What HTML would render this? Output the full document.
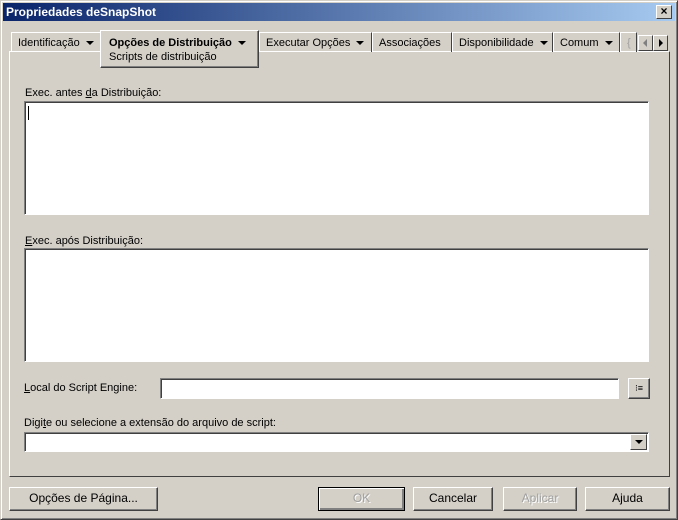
<!DOCTYPE html>
<html><head><style>
*{margin:0;padding:0;box-sizing:border-box}
body{width:678px;height:520px;background:#d4d0c8;font-family:"Liberation Sans",sans-serif;font-size:11px;color:#000;position:relative;overflow:hidden}
.a{position:absolute}
.win{left:0;top:0;width:678px;height:520px;border:1px solid;border-color:#d4d0c8 #404040 #404040 #d4d0c8;box-shadow:inset 1px 1px #fff,inset -1px -1px #808080}
.title{left:3px;top:3px;width:672px;height:18px;background:linear-gradient(90deg,#0a246a,#a6caf0);color:#fff;font-weight:bold;font-size:12px;line-height:18px;padding-left:3px}
.x{left:656px;top:5px;width:16px;height:14px;background:#d4d0c8;border:1px solid;border-color:#fff #404040 #404040 #fff;font-size:12px;line-height:11px;text-align:center;color:#000;font-weight:bold}
.tab{top:32px;height:20px;border:1px solid;border-color:#fff #404040 transparent #fff;border-bottom:none;line-height:20px;padding-left:6px;white-space:nowrap}
.tri{display:inline-block;width:0;height:0;border-left:4px solid transparent;border-right:4px solid transparent;border-top:4px solid #000;vertical-align:middle;margin-left:6px}
.panel{left:9px;top:51px;width:661px;height:426px;border:1px solid;border-color:#fff #404040 #404040 #fff}
.field{background:#fff;border:1px solid;border-color:#808080 #fff #fff #808080;box-shadow:inset 1px 1px #404040}
.btn{height:24px;border:1px solid;border-color:#fff #404040 #404040 #fff;box-shadow:inset -1px -1px #808080;text-align:center;line-height:21px;font-size:12px}
.dis{color:#a0a0a0;text-shadow:1px 1px #fff}
</style></head><body>
<div class="a win"></div>
<div class="a title">Propriedades deSnapShot</div>
<div class="a x">×</div>

<div class="a panel"></div>
<div class="a tab" style="left:11px;width:90px">Identificação<span class="tri"></span></div>
<div class="a tab" style="left:259px;width:113px">Executar Opções<span class="tri"></span></div>
<div class="a tab" style="left:372px;width:80px">Associações</div>
<div class="a tab" style="left:452px;width:101px">Disponibilidade<span class="tri"></span></div>
<div class="a tab" style="left:553px;width:67px">Comum<span class="tri"></span></div>
<div class="a tab" style="left:620px;width:17px;color:#a0a0a0">{</div>
<div class="a" style="left:638px;top:35px;width:15px;height:16px;border:1px solid;border-color:#fff #404040 #404040 #fff;background:#d4d0c8"><div class="a" style="left:4px;top:3px;border-right:4px solid #808080;border-top:4px solid transparent;border-bottom:4px solid transparent"></div></div>
<div class="a" style="left:653px;top:35px;width:15px;height:16px;border:1px solid;border-color:#fff #404040 #404040 #fff;background:#d4d0c8"><div class="a" style="left:5px;top:3px;border-left:4px solid #000;border-top:4px solid transparent;border-bottom:4px solid transparent"></div></div>
<div class="a" style="left:100px;top:30px;width:159px;height:38px;background:#d4d0c8;border:1px solid;border-color:#fff #404040 #404040 #fff;box-shadow:inset -1px -1px #808080;padding:5px 0 0 8px">
<div style="font-weight:bold;font-size:11px;line-height:14px">Opções de Distribuição<span class="tri"></span></div>
<div style="line-height:14px">Scripts de distribuição</div></div>

<div class="a" style="left:25px;top:87px">Exec. antes <u>d</u>a Distribuição:</div>
<div class="a field" style="left:24px;top:101px;width:625px;height:114px"><div class="a" style="left:3px;top:4px;width:1px;height:14px;background:#000"></div></div>
<div class="a" style="left:25px;top:235px"><u>E</u>xec. após Distribuição:</div>
<div class="a field" style="left:24px;top:248px;width:625px;height:114px"></div>

<div class="a" style="left:24px;top:382px"><u>L</u>ocal do Script Engine:</div>
<div class="a field" style="left:160px;top:378px;width:459px;height:21px"></div>
<div class="a" style="left:628px;top:378px;width:22px;height:21px;border:1px solid;border-color:#fff #404040 #404040 #fff;box-shadow:inset -1px -1px #808080;font-size:9px;text-align:center;line-height:18px">⁝≡</div>

<div class="a" style="left:24px;top:417px">Digi<u>t</u>e ou selecione a extensão do arquivo de script:</div>
<div class="a field" style="left:24px;top:432px;width:625px;height:20px"></div>
<div class="a" style="left:630px;top:434px;width:17px;height:16px;border:1px solid;border-color:#fff #404040 #404040 #fff;background:#d4d0c8"><div class="a" style="left:4px;top:5px;border-top:4px solid #000;border-left:4px solid transparent;border-right:4px solid transparent"></div></div>

<div class="a btn" style="left:9px;top:487px;width:149px">Opções de Pá<u>g</u>ina...</div>
<div class="a btn dis" style="left:318px;top:487px;width:87px;border-color:#000;box-shadow:inset 1px 1px #fff,inset -2px -2px #808080">OK</div>
<div class="a btn" style="left:413px;top:487px;width:80px">Cancelar</div>
<div class="a btn dis" style="left:503px;top:487px;width:74px">Aplicar</div>
<div class="a btn" style="left:585px;top:487px;width:85px">Ajuda</div>
</body></html>
